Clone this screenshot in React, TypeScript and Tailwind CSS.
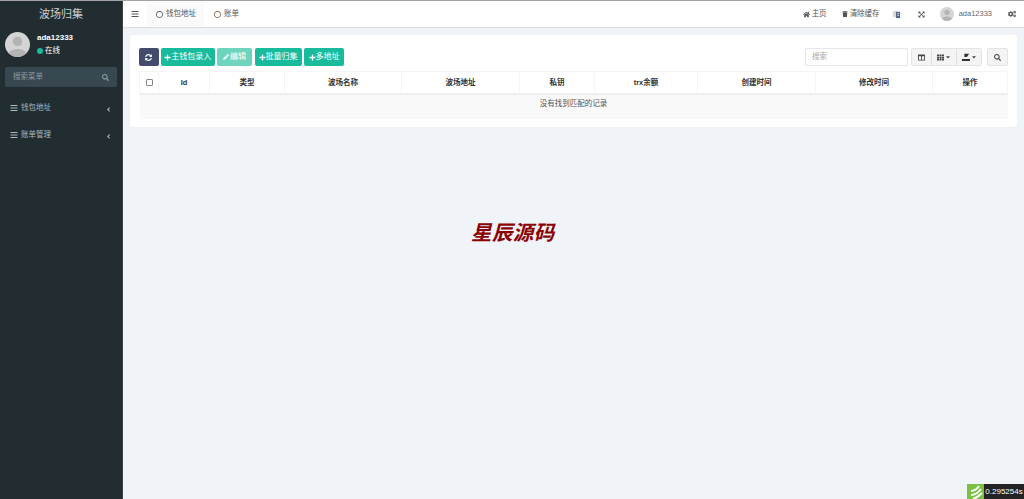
import { FaAngleLeft, FaBars, FaCaretDown, FaCogs, FaColumns, FaExpandArrowsAlt, FaHome, FaPencilAlt, FaPlus, FaRegCircle, FaSearch, FaSyncAlt, FaTh, FaTrash } from "react-icons/fa";

const font = { fontFamily: '"Liberation Sans","Noto Sans CJK SC",sans-serif' };

function Avatar({ size }: { size: string }) {
  return (
    <div className={`${size} rounded-full overflow-hidden shrink-0`}>
      <svg viewBox="0 0 40 40" className="w-full h-full">
        <rect width="40" height="40" fill="#d4d4d4" />
        <circle cx="20" cy="15" r="7.5" fill="#b3b3b3" />
        <ellipse cx="20" cy="37" rx="15" ry="10" fill="#b3b3b3" />
      </svg>
    </div>
  );
}

function MenuItem({ label }: { label: string }) {
  return (
    <div className="h-[27px] pl-[10px] pr-[10px] flex items-center text-[#a9b8bf] text-[7.5px]">
      <FaBars className="text-[8px] mr-[3px]" />
      <span>{label}</span>
      <FaAngleLeft className="ml-auto text-[7px] mt-[3px]" />
    </div>
  );
}

function Btn({ children, faded, w }: { children: React.ReactNode; faded?: boolean; w: string }) {
  return (
    <div className={`${w} h-[18px] rounded-[2px] text-white text-[8px] flex items-center justify-center ${faded ? "bg-[#6fd4bd]" : "bg-[#18bc9c]"}`}>
      {children}
    </div>
  );
}

const cols: [string, string][] = [
  ["Id", "w-[51px]"],
  ["类型", "w-[75px]"],
  ["波场名称", "w-[117px]"],
  ["波场地址", "w-[118px]"],
  ["私钥", "w-[75px]"],
  ["trx余额", "w-[103px]"],
  ["创建时间", "w-[118px]"],
  ["修改时间", "w-[117px]"],
  ["操作", "w-[75px]"],
];

export default function App() {
  return (
    <div style={font} className="relative w-[1024px] h-[499px] overflow-hidden flex bg-[#f0f3f7] border-t border-[#a3a3a3]">
      <aside className="w-[123px] shrink-0 bg-[#222d32] border-r border-[#3b4347] flex flex-col">
        <div className="h-[27px] flex items-center justify-center text-[#c9d0d3] text-[11px]">波场归集</div>
        <div className="flex items-center pl-[5px] h-[34px] mt-[-1px] gap-[7px]">
          <Avatar size="w-[25px] h-[25px]" />
          <div className="flex flex-col gap-[2px]">
            <span className="text-white text-[8px] font-bold leading-[11px]">ada12333</span>
            <span className="text-white text-[7.5px] leading-[11px] flex items-center gap-[2px]">
              <span className="w-[6px] h-[6px] rounded-full bg-[#18bc9c]" />在线
            </span>
          </div>
        </div>
        <div className="mx-[5px] mt-[6px] h-[20px] bg-[#374850] rounded-[2px] flex items-center px-[8px] text-[#8b9ba3] text-[7.5px]">
          <span>搜索菜单</span>
          <FaSearch className="ml-auto text-[7px]" />
        </div>
        <div className="mt-[7px] flex flex-col">
          <MenuItem label="钱包地址" />
          <MenuItem label="账单管理" />
        </div>
      </aside>

      <main className="flex-1 min-w-0 flex flex-col">
        <header className="h-[26px] shrink-0 bg-white flex items-center text-[#555] text-[7.5px] shadow-[0_1px_1px_rgba(0,0,0,0.08)]">
          <div className="w-[24px] flex justify-center"><FaBars className="text-[8px]" /></div>
          <div className="h-full w-[57px] bg-[#fafafa] flex items-center pl-[9px] gap-[3px]">
            <FaRegCircle className="text-[#2c3e50] text-[7px]" />
            <span>钱包地址</span>
          </div>
          <div className="h-full flex items-center pl-[10px] gap-[3px]">
            <FaRegCircle className="text-[#7a4a20] text-[7px]" />
            <span>账单</span>
          </div>
          <div className="ml-auto flex items-center pr-[8px]">
            <span className="flex items-center gap-[2px]"><FaHome className="text-[7px]" />主页</span>
            <span className="flex items-center gap-[2px] ml-[15px]"><FaTrash className="text-[6px]" />清除缓存</span>
            <svg viewBox="0 0 10 10" className="w-[9px] h-[9px] ml-[12px]">
              <rect x="1" y="1" width="5" height="7" fill="#d8d8d8" />
              <rect x="4.5" y="2" width="4.5" height="7" fill="#56688a" />
              <path d="M6 4h2M6 6h2" stroke="#fff" strokeWidth="0.8" />
            </svg>
            <FaExpandArrowsAlt className="text-[7px] ml-[17px]" />
            <span className="flex items-center gap-[5px] ml-[15px]"><Avatar size="w-[14px] h-[14px]" /><span className="text-[#666]">ada12333</span></span>
            <FaCogs className="text-[8px] ml-[16px]" />
          </div>
        </header>

        <section className="mx-[7px] mt-[8px] h-[92px] bg-white rounded-[2px] shadow-[0_0_1px_rgba(0,0,0,0.1)] px-[9px] pt-[13px]">
          <div className="flex items-center h-[18px]">
            <div className="flex gap-[2.5px]">
              <div className="w-[19.5px] h-[18px] rounded-[2px] bg-[#444c6e] text-white flex items-center justify-center"><FaSyncAlt className="text-[7px]" /></div>
              <Btn w="w-[53.5px]"><FaPlus className="text-[7px]" />主钱包录入</Btn>
              <Btn w="w-[35px]" faded><FaPencilAlt className="text-[6px] mr-[1px]" />编辑</Btn>
              <Btn w="w-[47px]"><FaPlus className="text-[7px]" />批量归集</Btn>
              <Btn w="w-[40px]"><FaPlus className="text-[7px]" />多地址</Btn>
            </div>
            <div className="ml-auto flex items-center">
              <div className="w-[103px] h-[18px] border border-[#e4e7ea] rounded-[1px] flex items-center pl-[6px] text-[#a8a8a8] text-[7.5px]">搜索</div>
              <div className="ml-[3px] h-[18px] flex bg-[#f4f4f4] border border-[#e4e4e4] rounded-[2px] text-[#444]">
                <div className="w-[20px] flex items-center justify-center border-r border-[#e0e0e0]"><FaColumns className="text-[7px]" /></div>
                <div className="w-[25px] flex items-center justify-center gap-[1px] border-r border-[#e0e0e0]"><FaTh className="text-[7px]" /><FaCaretDown className="text-[6px]" /></div>
                <div className="w-[24px] flex items-center justify-center gap-[1px]">
                  <svg viewBox="0 0 10 10" className="w-[8px] h-[8px]" fill="#333">
                    <path d="M3 1h3l3 0v0L6 5H3z" />
                    <rect x="0" y="7.5" width="10" height="2.5" />
                  </svg>
                  <FaCaretDown className="text-[6px]" />
                </div>
              </div>
              <div className="ml-[5px] w-[21px] h-[18px] bg-[#f4f4f4] border border-[#e4e4e4] rounded-[2px] text-[#444] flex items-center justify-center"><FaSearch className="text-[7px]" /></div>
            </div>
          </div>
          <table className="mt-[5px] w-[869px] table-fixed border-collapse text-[7.5px] text-[#333]">
            <thead>
              <tr className="h-[22px] border-b-2 border-[#eceff1]">
                <th className="w-[19px] border border-[#f4f4f4] border-b-0 font-normal">
                  <div className="mx-auto w-[7px] h-[7px] border border-[#888] rounded-[1px] bg-white" />
                </th>
                {cols.map(([t, w]) => (
                  <th key={t} className={`${w} border border-[#f4f4f4] border-b-0 font-bold text-center`}>{t}</th>
                ))}
              </tr>
            </thead>
            <tbody>
              <tr className="h-[25px] bg-[#f9f9f9]">
                <td colSpan={10} className="text-center align-middle pb-[6px] text-[#555]">没有找到匹配的记录</td>
              </tr>
            </tbody>
          </table>
        </section>

        <div className="mt-[92px] ml-[348px] text-[#8b0000] text-[20.5px] font-bold italic tracking-[0.4px] leading-[28px]">星辰源码</div>
      </main>

      <div className="absolute right-0 bottom-0 h-[15px] flex items-stretch">
        <div className="w-[17px] bg-[#7cc242] flex items-center justify-center">
          <svg viewBox="0 0 16 15" className="w-[16px] h-[15px]" fill="none" stroke="#fff" strokeWidth="2">
            <path d="M3 7 C6 7 9 5 11 2" />
            <path d="M3 11 C6 11 10 9 13 5" />
            <path d="M5 15 C8 14 11 12 14 9" />
          </svg>
        </div>
        <div className="w-[40px] bg-[#232323] text-white text-[8px] flex items-center justify-center">0.295254s</div>
      </div>
    </div>
  );
}
